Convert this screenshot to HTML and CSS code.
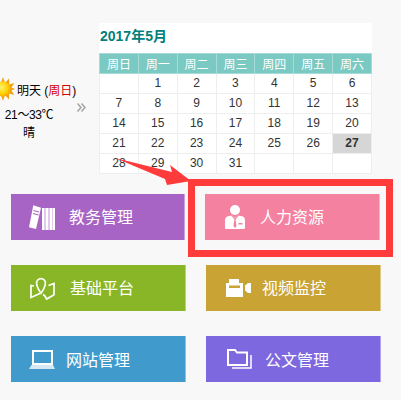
FILE: index.html
```html
<!DOCTYPE html>
<html lang="zh-CN">

<head>
  <meta charset="UTF-8" />
  <title>首页</title>
  <link rel="stylesheet" href="styles.css">
</head>

<body>
  <div class="page">
    <div class="top">
      <div class="weather">
        <div class="weather-head">
          <svg class="sun" width="24" height="24" viewBox="0 0 24 24">
            <defs>
              <radialGradient id="sun-core" cx="0.4" cy="0.4" r="0.7">
                <stop offset="0" stop-color="#fff176" />
                <stop offset="0.6" stop-color="#ffd200" />
                <stop offset="1" stop-color="#f59a00" />
              </radialGradient>
            </defs>
            <polygon fill="#f5a010"
              points="12,0 14,6 18,1.6 18.2,7.6 23.4,6 20.4,10.6 24,12 20.4,13.6 23.4,18 18.2,16.6 18,22.4 14,18 12,24 10,18 6,22.4 5.8,16.6 0.6,18 3.6,13.6 0,12 3.6,10.6 0.6,6 5.8,7.6 6,1.6 10,6" />
            <circle cx="12" cy="12" r="7.5" fill="url(#sun-core)" />
          </svg>
          <span>明天 (<span class="sunday">周日</span>)</span>
        </div>
        <div class="weather-temp">21～33℃</div>
        <div class="weather-sky">晴</div>
      </div>

      <svg class="more" width="9" height="9" viewBox="0 0 9 9" fill="none" stroke="#a0a0a0" stroke-width="1.4">
        <path d="M0.5 0.5L4 4.5L0.5 8.5M4.5 0.5L8 4.5L4.5 8.5" />
      </svg>

      <div class="calendar">
        <div class="calendar-title">2017年5月</div>
        <table>
          <thead>
            <tr>
              <th>周日</th>
              <th>周一</th>
              <th>周二</th>
              <th>周三</th>
              <th>周四</th>
              <th>周五</th>
              <th>周六</th>
            </tr>
          </thead>
          <tbody>
            <tr>
              <td></td>
              <td>1</td>
              <td>2</td>
              <td>3</td>
              <td>4</td>
              <td>5</td>
              <td>6</td>
            </tr>
            <tr>
              <td>7</td>
              <td>8</td>
              <td>9</td>
              <td>10</td>
              <td>11</td>
              <td>12</td>
              <td>13</td>
            </tr>
            <tr>
              <td>14</td>
              <td>15</td>
              <td>16</td>
              <td>17</td>
              <td>18</td>
              <td>19</td>
              <td>20</td>
            </tr>
            <tr>
              <td>21</td>
              <td>22</td>
              <td>23</td>
              <td>24</td>
              <td>25</td>
              <td>26</td>
              <td class="today">27</td>
            </tr>
            <tr>
              <td>28</td>
              <td>29</td>
              <td>30</td>
              <td>31</td>
              <td></td>
              <td></td>
              <td></td>
            </tr>
          </tbody>
        </table>
      </div>
    </div>

    <div class="tiles">
      <a class="tile tile-jiaowu">
        <svg class="icon" width="26" height="27" viewBox="0 0 26 27">
          <polygon fill="#fff" points="4.3,1.3 12,3.7 7,25 0,23.3" />
          <path d="M4.5 6.5L10 8M4 9.5L9.5 11" stroke="#a864c4" stroke-width="1.2" />
          <rect x="13" y="4" width="13" height="22" fill="#e3c9ec" />
          <path d="M14 4V26M18 4V26M22 4V26M25 4V26" stroke="#fff" stroke-width="2" />
        </svg>
        <span>教务管理</span>
      </a>
      <a class="tile tile-renli">
        <svg class="icon" width="20" height="24" viewBox="0 0 20 24">
          <circle cx="10" cy="5" r="5" fill="#fff" />
          <path fill="#fff" d="M2 11.5L7 10.5L10 13L13 10.5L18 11.5Q20 12.5 20 15V23Q20 24 19 24H1Q0 24 0 23V15Q0 12.5 2 11.5Z" />
          <path fill="#f4819f" d="M6.5 11L9.4 14.5L8.5 21L10 23L11.5 21L10.6 14.5L13.5 11L13.5 10L10 13.5L6.5 10Z" />
          <rect x="13.5" y="18" width="4" height="1.5" fill="#f4819f" />
        </svg>
        <span>人力资源</span>
      </a>
      <a class="tile tile-jichu">
        <svg class="icon" width="25" height="24" viewBox="0 0 25 24" fill="none" stroke="#fff" stroke-width="1.7">
          <path d="M4 9L1 8.5V20.5L7.5 17.5M14.5 18.5L16.7 22L24 17.7V6.5L18.5 8.5M7.5 17.5L10 16.5M14.5 18.5L13 17.5" />
          <path d="M11 16.3C8.5 12.5 6.6 10 6.6 6A4.4 4.4 0 0 1 15.4 6C15.4 10 13.5 12.5 11 16.3Z" />
        </svg>
        <span>基础平台</span>
      </a>
      <a class="tile tile-shipin">
        <svg class="icon" width="25" height="18" viewBox="0 0 25 18">
          <path fill="#fff" d="M3 0H13V4H17V18H0V4H3Z" />
          <rect x="3" y="6.5" width="11" height="2.5" fill="#c9a434" />
          <polygon fill="#fff" points="19,6.5 22,4 25,4 25,14 22,14 19,11.5" />
        </svg>
        <span>视频监控</span>
      </a>
      <a class="tile tile-wangzhan">
        <svg class="icon" width="26" height="19" viewBox="0 0 26 19">
          <rect x="4" y="1" width="19" height="13" fill="none" stroke="#fff" stroke-width="2" />
          <polygon fill="#d5e8f4" points="2.5,15 24,15 26,19 0,19" />
        </svg>
        <span>网站管理</span>
      </a>
      <a class="tile tile-gongwen">
        <svg class="icon" width="25" height="20" viewBox="0 0 25 20" fill="none" stroke="#fff" stroke-width="2">
          <path d="M1 16V1H8L10 3.5H20V16Z" />
          <path d="M5 19H24V6" stroke-width="1.5" />
        </svg>
        <span>公文管理</span>
      </a>
    </div>

    <!-- annotation drawn over the screenshot -->
    <div class="mark-box"></div>
    <svg class="mark-arrow" width="80" height="30" viewBox="0 0 80 30">
      <polygon fill="#ff3b3b" points="0,0 57,14 55,7 76,23 52,27 50,21" />
    </svg>
  </div>
</body>

</html>
```

FILE: styles.css
```css
* {
  box-sizing: border-box;
  margin: 0;
  padding: 0;
}

body {
  height: 100vh;
  overflow: hidden;
  background-color: #f8f8f8;
  color: #000;
  font-family: "Liberation Sans", "Noto Sans CJK SC", sans-serif;
  font-size: 12px;
}

.page {
  position: relative;
  height: 100%;
}

.top {
  display: flex;
  align-items: flex-start;
  padding-top: 23px;
}

.weather {
  flex: none;
  width: 77px;
  margin-top: 54px;
}

.weather-head {
  display: flex;
  align-items: center;
  gap: 2px;
  margin-left: -9px;
  white-space: nowrap;
}

.sunday {
  color: #d40000;
}

.weather-temp,
.weather-sky {
  width: 58px;
  text-align: center;
  white-space: nowrap;
}

.weather-temp {
  margin-top: 4px;
  letter-spacing: -0.4px;
}

.weather-sky {
  margin-top: 1px;
}

.more {
  flex: none;
  margin-top: 80px;
  margin-right: 13px;
}

.calendar {
  flex: none;
  width: 273px;
}

.calendar-title {
  height: 30px;
  padding-left: 1px;
  line-height: 27px;
  background-color: #fff;
  color: #00807a;
  font-size: 14px;
  font-weight: 700;
}

table {
  width: 273px;
  table-layout: fixed;
  border-collapse: collapse;
  background-color: #fff;
}

th,
td {
  height: 20px;
  padding: 0;
  text-align: center;
  vertical-align: middle;
  font-size: 12px;
}

th {
  border: 1px solid #a6dbd7;
  background-color: #7bc9c3;
  color: #fff;
  font-weight: 400;
}

td {
  padding-bottom: 2px;
  border: 1px solid #eee;
  color: #333;
}

td.today {
  background-color: #d6d6d6;
  font-weight: 700;
}

.tiles {
  display: grid;
  grid-template-columns: 175px 175px;
  grid-auto-rows: 46px;
  gap: 25px 20px;
  margin-top: 20px;
  padding-left: 11px;
}

.tile {
  display: flex;
  align-items: center;
  border-right: 1px solid rgba(255, 255, 255, 0.4);
  color: #fff;
  font-size: 16px;
}

/* first two rows sit a pixel higher than the last */
.tile-jiaowu span,
.tile-renli span,
.tile-jichu span,
.tile-shipin span {
  margin-top: -2px;
}

.tile-jiaowu {
  margin-right: 1px;
  padding-left: 18px;
  background-color: #a864c4;
}

.tile-jiaowu .icon {
  margin-right: 14px;
}

.tile-renli {
  margin-left: -1px;
  margin-right: 1px;
  padding-left: 20px;
  background-color: #f4819f;
}

.tile-renli .icon {
  margin-right: 15px;
}

.tile-jichu {
  padding-left: 19px;
  background-color: #88b627;
}

.tile-jichu .icon {
  margin-top: 2px;
  margin-right: 15px;
}

.tile-shipin {
  padding-left: 20px;
  background-color: #c9a434;
}

.tile-shipin .icon {
  margin-right: 11px;
}

.tile-wangzhan {
  padding-left: 18px;
  background-color: #409bcc;
}

.tile-wangzhan .icon {
  margin-right: 11px;
}

.tile-gongwen {
  padding-left: 21px;
  background-color: #7d68e0;
}

.tile-gongwen .icon {
  margin-right: 13px;
}

.mark-box {
  position: absolute;
  left: 188px;
  top: 179px;
  width: 205px;
  height: 78px;
  border: 7px solid #ff3b3b;
}

.mark-arrow {
  position: absolute;
  left: 115px;
  top: 158px;
}
```
